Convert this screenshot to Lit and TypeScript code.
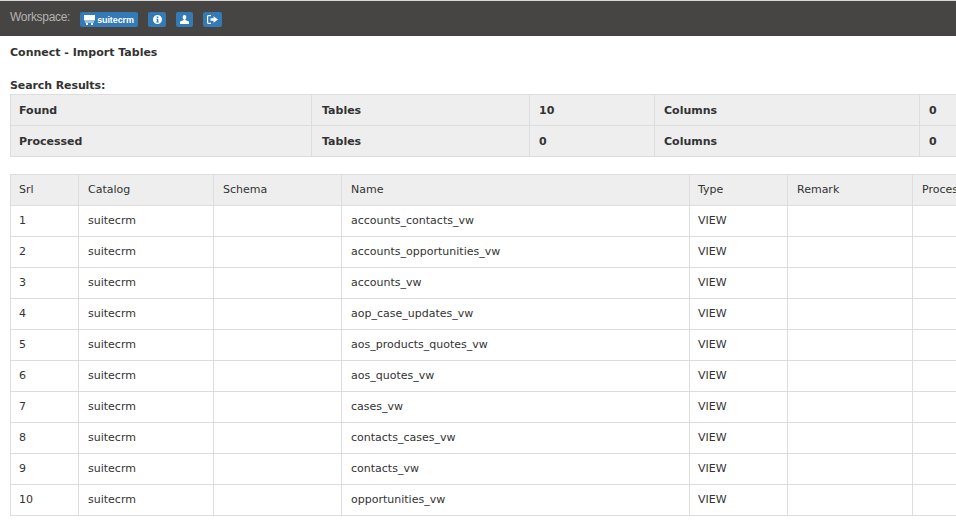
import { LitElement, html, css } from "lit";
import { customElement } from "lit/decorators.js";

const ROWS = [
  "accounts_contacts_vw",
  "accounts_opportunities_vw",
  "accounts_vw",
  "aop_case_updates_vw",
  "aos_products_quotes_vw",
  "aos_quotes_vw",
  "cases_vw",
  "contacts_cases_vw",
  "contacts_vw",
  "opportunities_vw",
];

@customElement("app-root")
export class AppRoot extends LitElement {
  static styles = css`
    :host {
      display: block;
      width: 956px;
      height: 523px;
      overflow: hidden;
      background: #fff;
      font-family: "DejaVu Sans", Verdana, sans-serif;
      font-size: 11px;
      color: #333;
    }
    .top {
      height: 1px;
      background: #d8d8d8;
    }
    .nav {
      height: 35px;
      box-sizing: border-box;
      background: #474543;
      display: flex;
      align-items: center;
      padding: 2px 0 0 10px;
    }
    .label {
      width: 70px;
      font-family: "Liberation Sans", Arial, sans-serif;
      font-size: 12px;
      letter-spacing: -0.3px;
      color: #b4b2b0;
      margin-bottom: 6px;
    }
    .btn {
      display: flex;
      align-items: center;
      justify-content: center;
      gap: 2px;
      height: 15px;
      background: #337ab7;
      border-radius: 2px;
      color: #fff;
      font-family: "Liberation Sans", Arial, sans-serif;
      font-weight: 700;
      font-size: 9px;
      letter-spacing: -0.1px;
    }
    .btn svg {
      display: block;
      fill: #fff;
    }
    .b-ws { width: 58px; }
    .b-i { width: 18px; margin-left: 10px; }
    .b-u { width: 17px; margin-left: 10px; }
    .b-o { width: 19px; margin-left: 10px; }
    .content {
      padding: 0 0 0 10px;
    }
    h1 {
      margin: 0;
      font-size: 11px;
      font-weight: 700;
      line-height: 14px;
      padding-top: 10px;
      color: #333;
    }
    h2 {
      margin: 19px 0 0;
      font-size: 11px;
      font-weight: 700;
      line-height: 14px;
      letter-spacing: -0.1px;
      color: #333;
    }
    table {
      border-collapse: collapse;
      table-layout: fixed;
      width: 956px;
    }
    td,
    th {
      border: 1px solid #ddd;
      height: 30px;
      padding: 0 8px 0 9px;
      text-align: left;
      font-weight: 400;
      box-sizing: content-box;
      white-space: nowrap;
      overflow: hidden;
    }
    td:first-child,
    th:first-child {
      padding-left: 8px;
    }
    .summary {
      margin-top: 1px;
      background: #eee;
    }
    .summary td {
      font-weight: 700;
    }
    .summary td:nth-child(2) {
      padding-left: 10px;
    }
    .summary .c1 { width: 284px; }
    .summary .c2 { width: 199px; }
    .summary .c3 { width: 107px; }
    .summary .c4 { width: 247px; }
    .summary .c5 { width: 60px; }
    .data {
      margin-top: 17px;
    }
    .data td,
    .data th {
      height: 28px;
      padding-bottom: 2px;
    }
    .data td:nth-child(5),
    .data th:nth-child(5) {
      padding-left: 8px;
    }
    .data thead {
      background: #eee;
    }
    .w1 { width: 51px; }
    .w2 { width: 117px; }
    .w3 { width: 110px; }
    .w4 { width: 330px; }
    .w5 { width: 81px; }
    .w6 { width: 107px; }
    .w7 { width: 60px; }
  `;

  render() {
    return html`
      <div class="top"></div>
      <div class="nav">
        <span class="label">Workspace:</span>
        <span class="btn b-ws">
          <svg width="11" height="10" viewBox="0 0 11 10">
            <path d="M0 0h11v5.500H0zM1 6.500h9v1H1zM2 8h2v2H2zM7 8h2v2H7z" />
          </svg>
          suitecrm
        </span>
        <span class="btn b-i">
          <svg width="9" height="9" viewBox="0 0 9 9">
            <path
              fill-rule="evenodd"
              d="M4.500 0a4.500 4.500 0 1 1 0 9 4.500 4.500 0 0 1 0-9zM3.700 1.500v1.400h1.600V1.500zM3.300 3.700v.9h.5v2H3.300v.9h2.500v-.9h-.5V3.700z"
            />
          </svg>
        </span>
        <span class="btn b-u">
          <svg width="9" height="9" viewBox="0 0 9 9">
            <path d="M4.500 0C5.600 0 6.300.9 6.300 2.200c0 1-.5 1.900-1.100 2.300v.5L9 6.600V9H0V6.600L3.800 5v-.5C3.200 4.100 2.700 3.200 2.700 2.200 2.700.9 3.400 0 4.500 0z" />
          </svg>
        </span>
        <span class="btn b-o">
          <svg width="11" height="9" viewBox="0 0 11 9">
            <path d="M0 1.500C0 .7.700 0 1.500 0H4v1.200H1.600c-.2 0-.4.2-.4.4v5.800c0 .2.2.4.4.4H4V9H1.500C.7 9 0 8.300 0 7.500zM6.500 1.200 11 4.500 6.500 7.800V5.700H3.500V3.300h3z" />
          </svg>
        </span>
      </div>
      <div class="content">
        <h1>Connect - Import Tables</h1>
        <h2>Search Results:</h2>
        <table class="summary">
          <tr>
            <td class="c1">Found</td>
            <td class="c2">Tables</td>
            <td class="c3">10</td>
            <td class="c4">Columns</td>
            <td class="c5">0</td>
          </tr>
          <tr>
            <td>Processed</td>
            <td>Tables</td>
            <td>0</td>
            <td>Columns</td>
            <td>0</td>
          </tr>
        </table>
        <table class="data">
          <thead>
            <tr>
              <th class="w1">Srl</th>
              <th class="w2">Catalog</th>
              <th class="w3">Schema</th>
              <th class="w4">Name</th>
              <th class="w5">Type</th>
              <th class="w6">Remark</th>
              <th class="w7">Processed</th>
            </tr>
          </thead>
          <tbody>
            ${ROWS.map(
              (name, i) => html`
                <tr>
                  <td>${i + 1}</td>
                  <td>suitecrm</td>
                  <td></td>
                  <td>${name}</td>
                  <td>VIEW</td>
                  <td></td>
                  <td></td>
                </tr>
              `
            )}
          </tbody>
        </table>
      </div>
    `;
  }
}
